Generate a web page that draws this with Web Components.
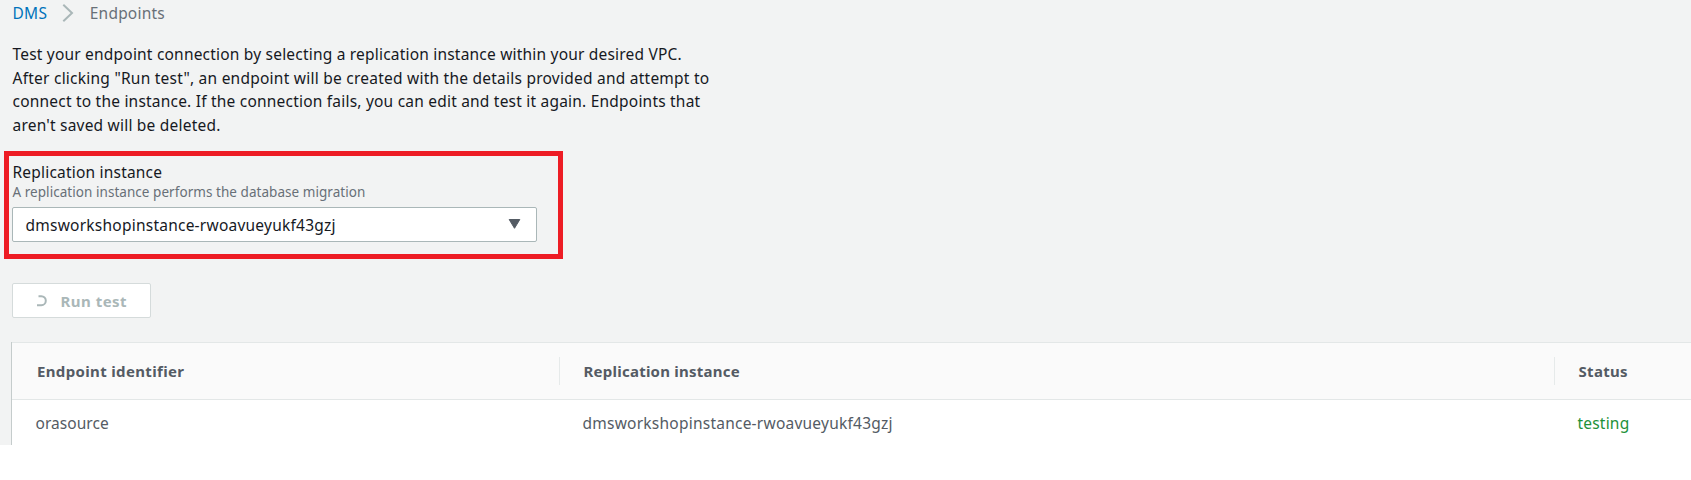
<!DOCTYPE html>
<html lang="en">
<head>
<meta charset="utf-8">
<title>DMS Endpoints</title>
<style>
html,body{margin:0;background:#fff}
body{font-family:"Noto Sans","Open Sans",sans-serif;font-size:15.5px;color:#16191f}
</style>
</head>
<body>
<endpoint-page>
  <crumb-trail><a slot="parent">DMS</a><span>Endpoints</span></crumb-trail>
  <intro-text>
    <text-line style="letter-spacing:.2px">Test your endpoint connection by selecting a replication instance within your desired VPC.</text-line>
    <text-line style="letter-spacing:.24px">After clicking "Run test", an endpoint will be created with the details provided and attempt to</text-line>
    <text-line style="letter-spacing:.21px">connect to the instance. If the connection fails, you can edit and test it again. Endpoints that</text-line>
    <text-line style="letter-spacing:.21px">aren't saved will be deleted.</text-line>
  </intro-text>
  <instance-field>
    <span slot="label">Replication instance</span>
    <span slot="hint">A replication instance performs the database migration</span>
    <select-box>dmsworkshopinstance-rwoavueyukf43gzj</select-box>
  </instance-field>
  <run-button>Run test</run-button>
  <result-table>
    <head-cell slot="head" style="letter-spacing:.35px">Endpoint identifier</head-cell>
    <head-cell slot="head" style="letter-spacing:.24px" divided>Replication instance</head-cell>
    <head-cell slot="head" style="letter-spacing:.3px" divided>Status</head-cell>
    <body-cell style="letter-spacing:.05px">orasource</body-cell>
    <body-cell style="letter-spacing:.235px">dmsworkshopinstance-rwoavueyukf43gzj</body-cell>
    <body-cell style="letter-spacing:.2px;color:#1d9139">testing</body-cell>
  </result-table>
</endpoint-page>
<script>
const define = (name, html) => customElements.define(name, class extends HTMLElement {
  constructor() {
    super();
    this.attachShadow({ mode: 'open' }).innerHTML = html;
  }
});

define('endpoint-page', `<style>
:host{display:flex;flex-direction:column;align-items:flex-start;box-sizing:border-box;height:445px;overflow:hidden;background:#f2f3f3;padding-top:1px}
</style><slot></slot>`);

define('crumb-trail', `<style>
:host{display:flex;align-items:center;height:24px;line-height:24px;margin-left:12.5px;color:#687078;letter-spacing:.2px}
.parent{color:#0073bb;letter-spacing:.3px}
svg{display:block;margin:0 15.5px 0 15px}
</style><span class="parent"><slot name="parent"></slot></span>
<svg width="12" height="20" viewBox="0 0 12 20" fill="none" stroke="#aab7b8" stroke-width="2"><path d="M1.3 1.7L10 10L1.3 18.3"/></svg>
<slot></slot>`);

define('intro-text', `<style>
:host{display:block;margin:18px 0 0 12.5px;line-height:23.6px}
</style><slot></slot>`);

define('text-line', `<style>:host{display:block;white-space:nowrap}</style><slot></slot>`);

define('instance-field', `<style>
:host{display:flex;flex-direction:column;box-sizing:border-box;width:559px;height:108px;margin:13.6px 0 0 4px;border:5px solid #ed1c24;padding:4px 22px 0 3px}
.label{line-height:24px;height:22px;padding-left:.5px;letter-spacing:.2px}
.hint{font-size:13.5px;line-height:20px;height:25px;padding-left:.5px;color:#687078;letter-spacing:.05px}
</style><div class="label"><slot name="label"></slot></div><div class="hint"><slot name="hint"></slot></div><slot></slot>`);

define('select-box', `<style>
:host{display:flex;align-items:center;justify-content:space-between;box-sizing:border-box;width:524.5px;height:35px;padding:0 15px 0 12.5px;border:1px solid #aab7b8;border-radius:2px;background:#fff;letter-spacing:.235px;line-height:24px}
span{padding-top:2px}
svg{display:block}
</style><span><slot></slot></span>
<svg width="13" height="10" viewBox="0 0 13 10"><path d="M1.2 .5H11.8L6.5 9.3Z" fill="#545b64" stroke="#545b64" stroke-linejoin="round"/></svg>`);

define('run-button', `<style>
:host{display:flex;align-items:center;box-sizing:border-box;width:139px;height:35px;margin:24px 0 0 12px;padding:2px 0 0 24px;border:1px solid #d5dbdb;border-radius:2px;background:#fff;color:#aab7b8;font-size:15px;font-weight:700;letter-spacing:.48px;line-height:24px}
svg{display:block;margin-right:13.5px}
</style><svg width="10" height="12" viewBox="0 0 10 12" fill="none" stroke="#aab7b8" stroke-width="2"><path d="M1.5 1.2H4.3A4.4 4.4 0 0 1 4.3 10.2H0"/></svg>
<slot></slot>`);

define('result-table', `<style>
:host{display:grid;align-self:stretch;grid-template-rows:58px 1fr;height:103px;flex:none;margin:24px 0 0 11px;box-sizing:border-box;border-left:1px solid #c5cccc;background:#fff;color:#545b64}
.row{display:grid;grid-template-columns:547px 995px 1fr}
.head{box-sizing:border-box;align-items:center;background:#fafafa;border-top:1px solid #e3e7e7;border-bottom:1px solid #e3e7e7}
</style><div class="row head"><slot name="head"></slot></div><div class="row"><slot></slot></div>`);

define('head-cell', `<style>
:host{display:block;box-sizing:border-box;height:28px;line-height:28px;padding-left:24px;border-left:1px solid transparent;font-size:15px;font-weight:700;white-space:nowrap}
:host([divided]){border-left-color:#e6eaea;padding-left:23.5px}
</style><slot></slot>`);

define('body-cell', `<style>
:host{display:block;padding-left:23.5px;line-height:47px;white-space:nowrap}
</style><slot></slot>`);
</script>
</body>
</html>
